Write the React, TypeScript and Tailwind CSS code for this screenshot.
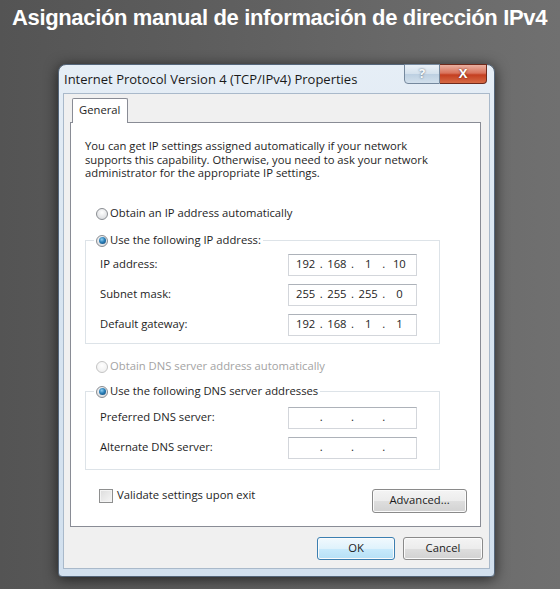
import { Fragment } from 'react'

const uiFont = { fontFamily: '"Open Sans", "Noto Sans", "DejaVu Sans", sans-serif' }

function Radio({ checked = false, disabled = false }: { checked?: boolean; disabled?: boolean }) {
  return (
    <span
      className={`w-[12px] h-[12px] rounded-full border flex items-center justify-center shrink-0 ${
        disabled
          ? 'border-[#c4c4c4] bg-[radial-gradient(circle_at_50%_35%,#ffffff,#ececec)]'
          : 'border-[#8a8d92] bg-[radial-gradient(circle_at_50%_35%,#ffffff,#d2d4d8)]'
      }`}
    >
      {checked && (
        <span className="w-[7px] h-[7px] rounded-full bg-[radial-gradient(circle_at_40%_35%,#8fd0f4,#2a7fb8_45%,#0f3f6c)]" />
      )}
    </span>
  )
}

function IpBox({ parts }: { parts: string[] }) {
  return (
    <div className="w-[129px] h-[22px] bg-white border border-[#d3d6db] border-t-[#adb2b9] flex items-center px-[3px] text-[#1e1e1e]">
      {parts.map((p, i) => (
        <Fragment key={i}>
          {i > 0 && <span className="w-[4px] text-center">.</span>}
          <span className="flex-1 text-center">{p}</span>
        </Fragment>
      ))}
    </div>
  )
}

function Row({ label, parts }: { label: string; parts: string[] }) {
  return (
    <div className="flex items-center h-[22px]">
      <span className="w-[202px] pl-[14px]">{label}</span>
      <IpBox parts={parts} />
    </div>
  )
}

function WinButton({ children, primary = false, className = '' }: { children: string; primary?: boolean; className?: string }) {
  return (
    <button
      className={`rounded-[3px] border text-[11.25px] text-[#1b1b1b] flex items-center justify-center shadow-[inset_0_0_0_1px_#fbfbfb] ${
        primary
          ? 'border-[#3c7fb1] bg-[linear-gradient(180deg,#f1f9fe_0%,#dff2fc_50%,#c8eafc_51%,#b6e0f6_100%)]'
          : 'border-[#8a8a8a] bg-[linear-gradient(180deg,#f4f4f4_0%,#ececec_50%,#dedede_51%,#d2d2d2_100%)]'
      } ${className}`}
    >
      {children}
    </button>
  )
}

export default function App() {
  return (
    <div className="w-[560px] h-[589px] overflow-hidden bg-[linear-gradient(90deg,#545454_0%,#5d5d5d_35%,#686868_70%,#707070_100%)]">
      <h1
        className="pl-[12px] pt-[5px] text-[22px] leading-[26px] font-bold text-white tracking-[-0.35px]"
        style={{ fontFamily: '"Liberation Sans", Arial, sans-serif' }}
      >
        Asignación manual de información de dirección IPv4
      </h1>

      {/* Window */}
      <div
        className="ml-[58px] mt-[33px] w-[437px] h-[513px] rounded-t-[8px] rounded-b-[4px] border border-[#55667a] shadow-[0_2px_14px_rgba(0,0,0,0.65)] bg-[linear-gradient(180deg,#e6eef6_0%,#d8e5f1_40%,#d2e0ee_100%)] px-[4px] pb-[7px] flex flex-col"
        style={uiFont}
      >
        {/* Title bar */}
        <div className="h-[28px] flex items-start">
          <span className="flex-1 pl-[1px] pt-[6px] text-[13px] leading-[17px] text-[#1a1a1a]">
            Internet Protocol Version 4 (TCP/IPv4) Properties
          </span>
          <div className="flex -mt-[1px] mr-[3px]">
            <div className="w-[36px] h-[20px] rounded-bl-[4px] border border-[#75889d] bg-[linear-gradient(180deg,#eaf1f8_0%,#d3e0ec_50%,#bccfe1_51%,#d2e0ec_100%)] flex items-center justify-center text-[13px] font-bold text-[#f7f9fb] [text-shadow:0_0_2px_#4a5b6e]">
              ?
            </div>
            <div className="w-[47px] h-[20px] rounded-br-[4px] border border-l-0 border-[#6e2a1c] bg-[linear-gradient(180deg,#eab0a0_0%,#d9735c_45%,#c43f20_55%,#d66a45_100%)] flex items-center justify-center text-[13px] font-bold text-white [text-shadow:0_0_2px_#5a1a0c]">
              X
            </div>
          </div>
        </div>

        {/* Client area */}
        <div className="flex-1 bg-[#f0f0f0] border border-[#a9b9ca] flex flex-col text-[11.25px] text-[#1e1e1e]">
          <div className="pt-[4px] pl-[8px] flex">
            <div className="relative z-10 -mb-px h-[25px] w-[56px] bg-white border border-b-0 border-[#898c95] rounded-t-[2px] pl-[6px] pt-[4px] leading-[14px]">
              General
            </div>
          </div>

          <div className="ml-[6px] w-[411px] h-[405px] bg-white border border-[#898c95] flex flex-col">
            <p className="ml-[14px] mt-[16px] leading-[13.5px] w-[366px]">
              You can get IP settings assigned automatically if your network supports this capability. Otherwise, you need to ask your network administrator for the appropriate IP settings.
            </p>

            <div className="ml-[25px] mt-[27px] h-[14px] flex items-center gap-[2px]">
              <Radio />
              <span>Obtain an IP address automatically</span>
            </div>

            <fieldset className="ml-[14px] mt-[13px] w-[355px] border border-[#dde3e8] pb-[7px]">
              <legend className="ml-[8px] px-[2px] h-[14px] flex items-center gap-[2px]">
                <Radio checked />
                <span>Use the following IP address:</span>
              </legend>
              <div className="mt-[6px] flex flex-col gap-[8px]">
                <Row label="IP address:" parts={['192', '168', '1', '10']} />
                <Row label="Subnet mask:" parts={['255', '255', '255', '0']} />
                <Row label="Default gateway:" parts={['192', '168', '1', '1']} />
              </div>
            </fieldset>

            <div className="ml-[25px] mt-[16px] h-[14px] flex items-center gap-[2px] text-[#a3a3a3]">
              <Radio disabled />
              <span>Obtain DNS server address automatically</span>
            </div>

            <fieldset className="ml-[14px] mt-[11px] w-[355px] border border-[#dde3e8] pb-[10px]">
              <legend className="ml-[8px] px-[2px] h-[14px] flex items-center gap-[2px]">
                <Radio checked />
                <span>Use the following DNS server addresses</span>
              </legend>
              <div className="mt-[8px] flex flex-col gap-[8px]">
                <Row label="Preferred DNS server:" parts={['', '', '', '']} />
                <Row label="Alternate DNS server:" parts={['', '', '', '']} />
              </div>
            </fieldset>

            <div className="mt-[19px] flex items-start justify-between">
              <div className="ml-[28px] flex items-center gap-[4px] h-[14px]">
                <span className="w-[14px] h-[14px] border border-[#8e8f8f] bg-[linear-gradient(135deg,#dcdcdc,#f6f6f6)] shadow-[inset_0_0_0_1px_#f4f4f4]" />
                <span>Validate settings upon exit</span>
              </div>
              <WinButton className="mr-[13px] w-[95px] h-[24px]">Advanced...</WinButton>
            </div>
          </div>

          <div className="mt-[10px] flex justify-end gap-[8px] pr-[6px]">
            <WinButton primary className="w-[78px] h-[23px]">
              OK
            </WinButton>
            <WinButton className="w-[80px] h-[23px]">Cancel</WinButton>
          </div>
        </div>
      </div>
    </div>
  )
}
